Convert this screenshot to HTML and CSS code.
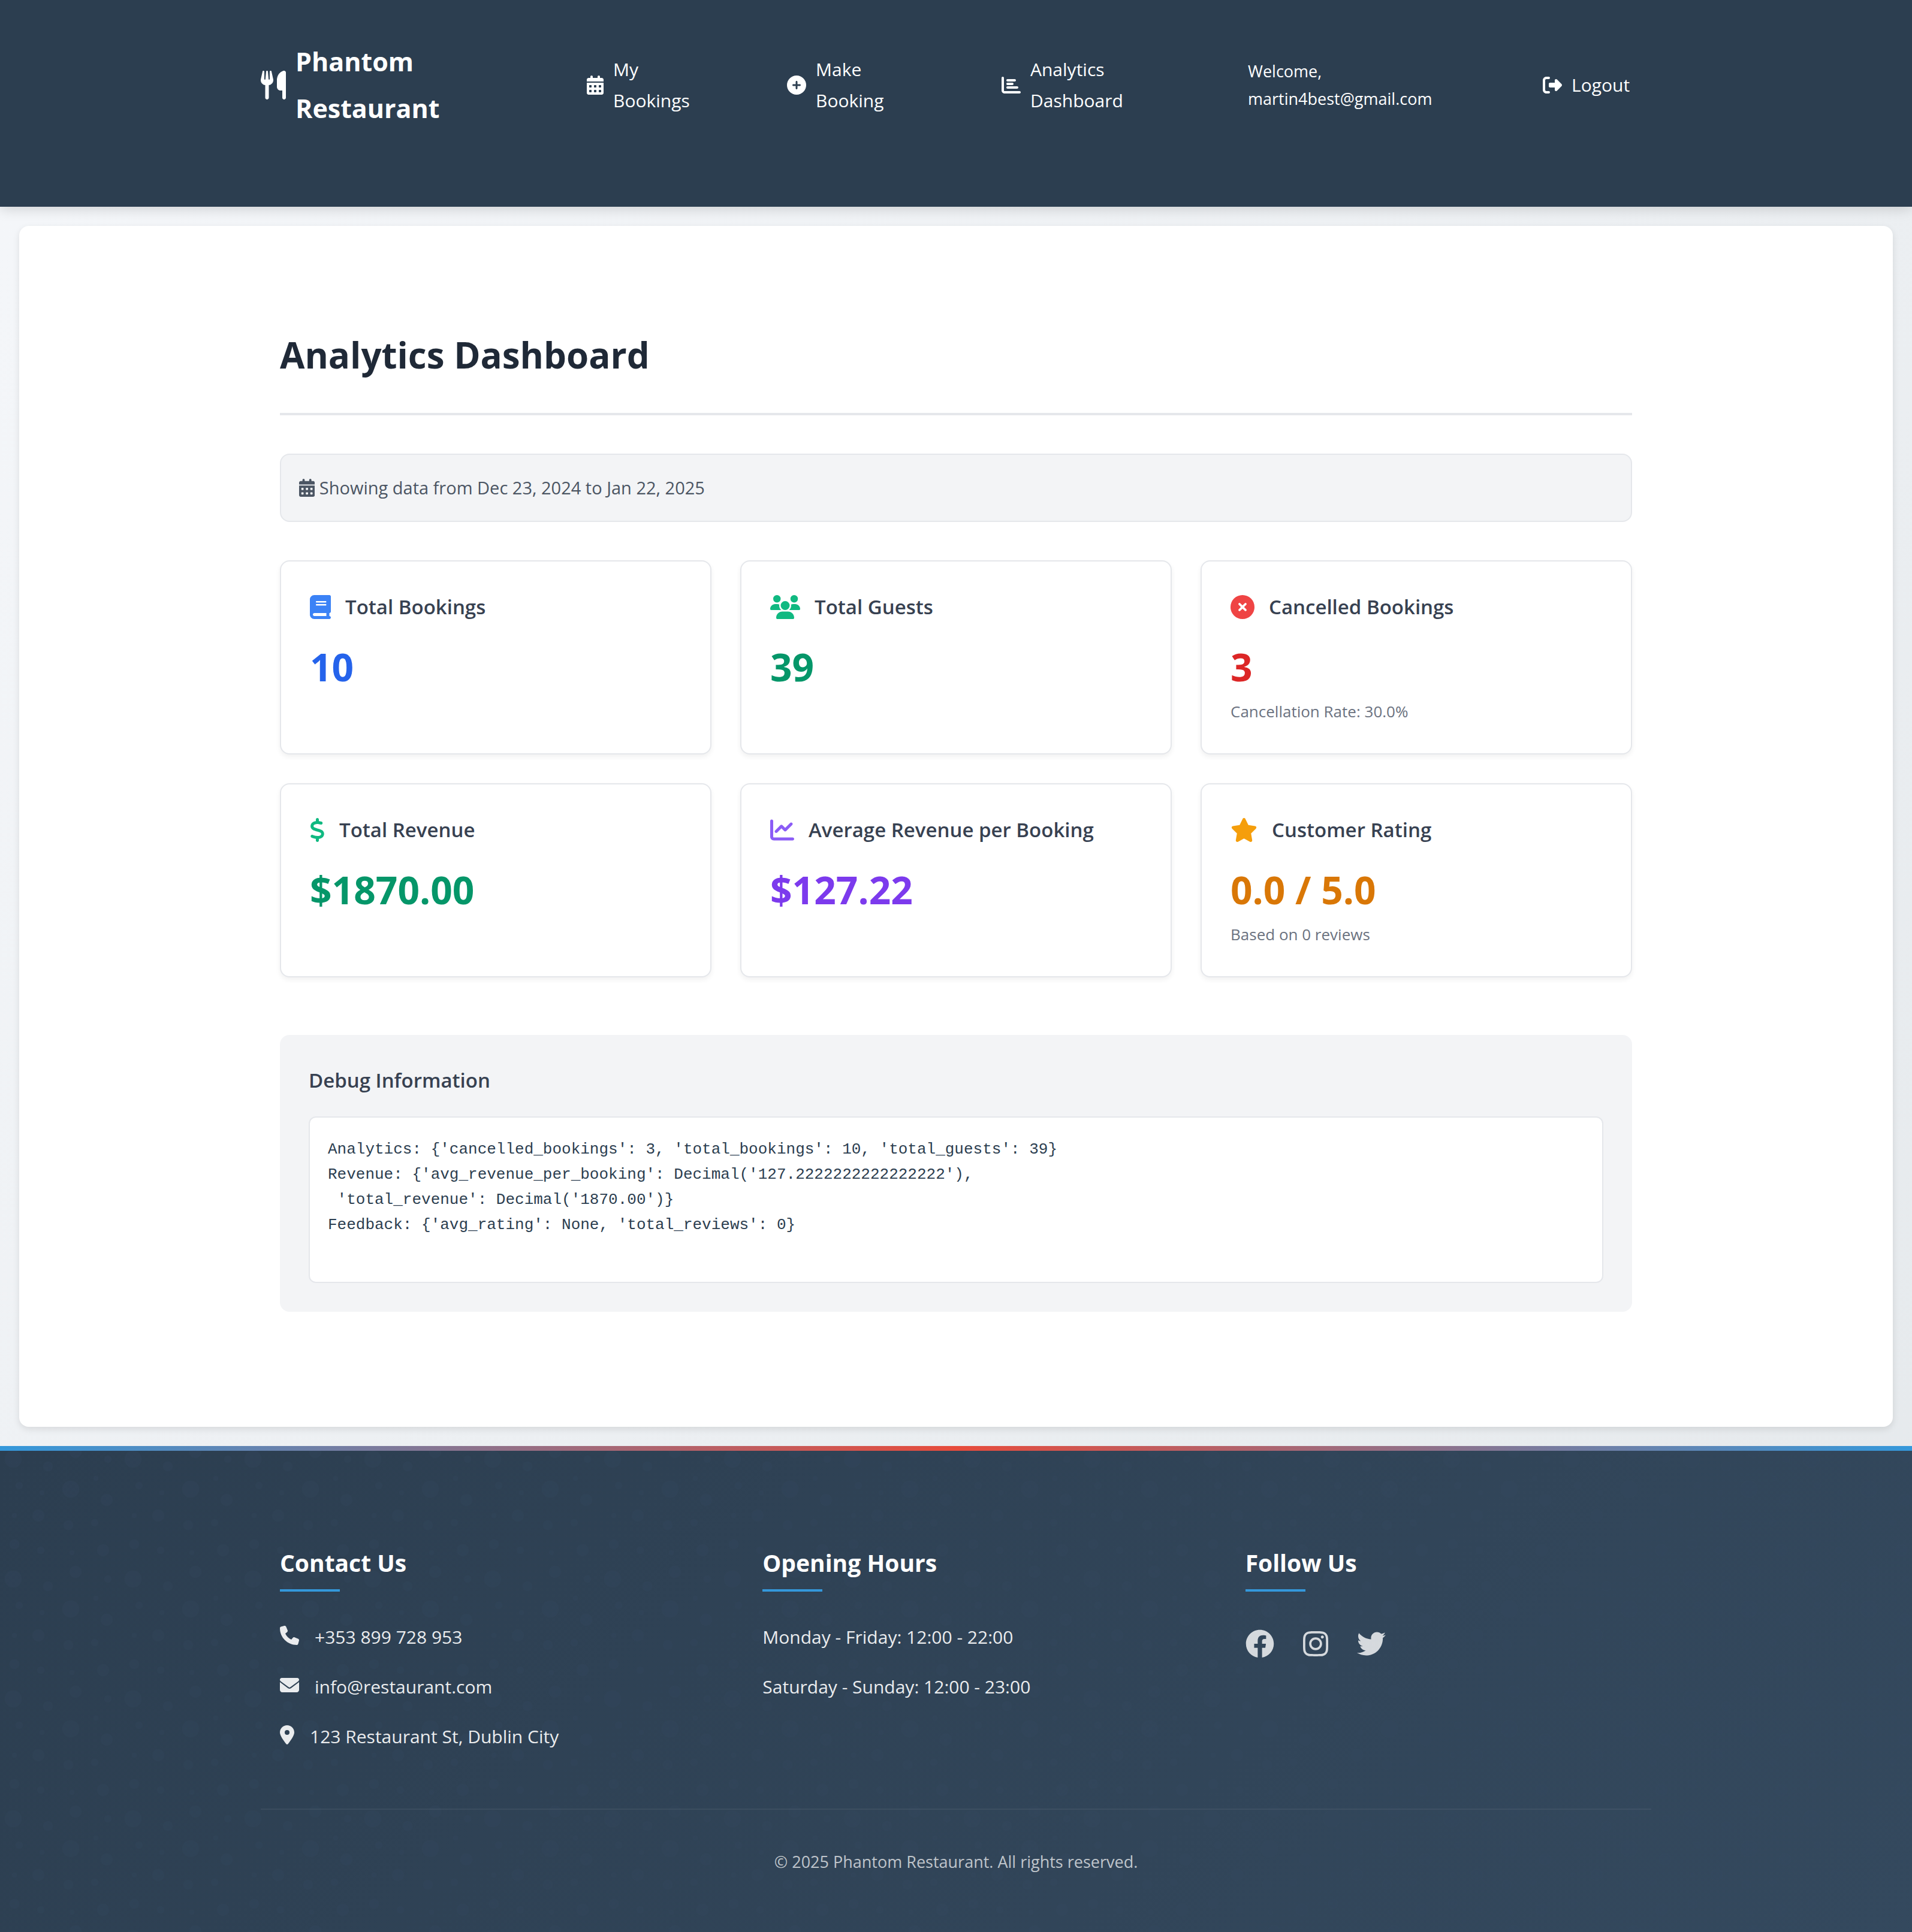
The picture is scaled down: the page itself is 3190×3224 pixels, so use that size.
FILE: index.html
```
<!DOCTYPE html>
<html lang="en">
<head>
<meta charset="utf-8">
<meta name="viewport" content="width=device-width, initial-scale=1">
<title>Analytics Dashboard - Phantom Restaurant</title>
<link rel="stylesheet" href="styles.css">
</head>
<body>
<header class="site-header">
  <div class="header-inner">
    <a class="brand" href="#">
      <svg class="icon icon-lg" viewBox="0 0 448 512" aria-hidden="true"><path d="M416 0C400 0 288 32 288 176V288c0 35.3 28.7 64 64 64h32V480c0 17.7 14.3 32 32 32s32-14.3 32-32V352 240 32c0-17.7-14.3-32-32-32zM64 16C64 7.8 57.9 1 49.7 .1S34.2 4.6 32.4 12.5L2.1 148.8C.7 155.1 0 161.5 0 167.9c0 45.9 35.1 83.6 80 87.7V480c0 17.7 14.3 32 32 32s32-14.3 32-32V255.6c44.9-4.1 80-41.8 80-87.7c0-6.4-.7-12.8-2.1-19.1L191.6 12.5c-1.8-8-9.3-13.3-17.4-12.4S160 7.8 160 16V150.2c0 5.4-4.4 9.8-9.8 9.8c-5.1 0-9.3-3.9-9.8-9L127.9 14.6C127.2 6.3 120.3 0 112 0s-15.2 6.3-15.9 14.6L83.7 151c-.5 5.1-4.7 9-9.8 9c-5.4 0-9.8-4.4-9.8-9.8V16z"/></svg>
      <span class="stacked">Phantom Restaurant</span>
    </a>
    <nav class="nav" aria-label="Main">
      <a class="nav-link" href="#">
        <svg class="icon icon-sm" viewBox="0 0 448 512" aria-hidden="true"><path d="M128 0c17.7 0 32 14.3 32 32V64H288V32c0-17.7 14.3-32 32-32s32 14.3 32 32V64h48c26.5 0 48 21.5 48 48v48H0V112C0 85.5 21.5 64 48 64H96V32c0-17.7 14.3-32 32-32zM0 192H448V464c0 26.5-21.5 48-48 48H48c-26.5 0-48-21.5-48-48V192zm64 80v32c0 8.8 7.2 16 16 16h32c8.8 0 16-7.2 16-16V272c0-8.8-7.2-16-16-16H80c-8.8 0-16 7.2-16 16zm128 0v32c0 8.8 7.2 16 16 16h32c8.8 0 16-7.2 16-16V272c0-8.8-7.2-16-16-16H208c-8.8 0-16 7.2-16 16zm144-16c-8.8 0-16 7.2-16 16v32c0 8.8 7.2 16 16 16h32c8.8 0 16-7.2 16-16V272c0-8.8-7.2-16-16-16H336zM64 400v32c0 8.8 7.2 16 16 16h32c8.8 0 16-7.2 16-16V400c0-8.8-7.2-16-16-16H80c-8.8 0-16 7.2-16 16zm144-16c-8.8 0-16 7.2-16 16v32c0 8.8 7.2 16 16 16h32c8.8 0 16-7.2 16-16V400c0-8.8-7.2-16-16-16H208zm112 16v32c0 8.8 7.2 16 16 16h32c8.8 0 16-7.2 16-16V400c0-8.8-7.2-16-16-16H336c-8.8 0-16 7.2-16 16z"/></svg>
        <span class="stacked">My Bookings</span>
      </a>
      <a class="nav-link" href="#">
        <svg class="icon icon-sm" viewBox="0 0 512 512" aria-hidden="true"><path d="M256 512A256 256 0 1 0 256 0a256 256 0 1 0 0 512zM232 344V280H168c-13.3 0-24-10.7-24-24s10.7-24 24-24h64V168c0-13.3 10.7-24 24-24s24 10.7 24 24v64h64c13.3 0 24 10.7 24 24s-10.7 24-24 24H280v64c0 13.3-10.7 24-24 24s-24-10.7-24-24z"/></svg>
        <span class="stacked">Make Booking</span>
      </a>
      <a class="nav-link" href="#">
        <svg class="icon icon-sm" viewBox="0 0 512 512" aria-hidden="true"><path d="M32 32c17.7 0 32 14.3 32 32V400c0 8.8 7.2 16 16 16H480c17.7 0 32 14.3 32 32s-14.3 32-32 32H80c-44.2 0-80-35.8-80-80V64C0 46.3 14.3 32 32 32zm96 96c0-17.7 14.3-32 32-32l192 0c17.7 0 32 14.3 32 32s-14.3 32-32 32l-192 0c-17.7 0-32-14.3-32-32zm32 64H288c17.7 0 32 14.3 32 32s-14.3 32-32 32H160c-17.7 0-32-14.3-32-32s14.3-32 32-32zm0 96H416c17.7 0 32 14.3 32 32s-14.3 32-32 32H160c-17.7 0-32-14.3-32-32s14.3-32 32-32z"/></svg>
        <span class="stacked">Analytics Dashboard</span>
      </a>
      <span class="welcome stacked">Welcome, martin4best@gmail.com</span>
      <a class="nav-link" href="#">
        <svg class="icon icon-sm" viewBox="0 0 512 512" aria-hidden="true"><path d="M377.9 105.9L500.7 228.7c7.2 7.2 11.3 17.1 11.3 27.3s-4.1 20.1-11.3 27.3L377.9 406.1c-6.4 6.4-15 9.9-24 9.9c-18.7 0-33.9-15.2-33.9-33.9l0-62.1-128 0c-17.7 0-32-14.3-32-32l0-64c0-17.7 14.3-32 32-32l128 0 0-62.1c0-18.7 15.2-33.9 33.9-33.9c9 0 17.6 3.6 24 9.9zM160 96L96 96c-17.7 0-32 14.3-32 32l0 256c0 17.7 14.3 32 32 32l64 0c17.7 0 32 14.3 32 32s-14.3 32-32 32l-64 0c-53 0-96-43-96-96L0 128C0 75 43 32 96 32l64 0c17.7 0 32 14.3 32 32s-14.3 32-32 32z"/></svg>
        <span>Logout</span>
      </a>
    </nav>
  </div>
</header>

<main class="page">
  <div class="content">
    <h1 class="page-title">Analytics Dashboard</h1>

    <p class="range">
      <svg class="icon range-icon" viewBox="0 0 448 512" aria-hidden="true"><path d="M128 0c17.7 0 32 14.3 32 32V64H288V32c0-17.7 14.3-32 32-32s32 14.3 32 32V64h48c26.5 0 48 21.5 48 48v48H0V112C0 85.5 21.5 64 48 64H96V32c0-17.7 14.3-32 32-32zM0 192H448V464c0 26.5-21.5 48-48 48H48c-26.5 0-48-21.5-48-48V192zm64 80v32c0 8.8 7.2 16 16 16h32c8.8 0 16-7.2 16-16V272c0-8.8-7.2-16-16-16H80c-8.8 0-16 7.2-16 16zm128 0v32c0 8.8 7.2 16 16 16h32c8.8 0 16-7.2 16-16V272c0-8.8-7.2-16-16-16H208c-8.8 0-16 7.2-16 16zm144-16c-8.8 0-16 7.2-16 16v32c0 8.8 7.2 16 16 16h32c8.8 0 16-7.2 16-16V272c0-8.8-7.2-16-16-16H336zM64 400v32c0 8.8 7.2 16 16 16h32c8.8 0 16-7.2 16-16V400c0-8.8-7.2-16-16-16H80c-8.8 0-16 7.2-16 16zm144-16c-8.8 0-16 7.2-16 16v32c0 8.8 7.2 16 16 16h32c8.8 0 16-7.2 16-16V400c0-8.8-7.2-16-16-16H208zm112 16v32c0 8.8 7.2 16 16 16h32c8.8 0 16-7.2 16-16V400c0-8.8-7.2-16-16-16H336c-8.8 0-16 7.2-16 16z"/></svg>
      Showing data from Dec 23, 2024 to Jan 22, 2025
    </p>

    <section class="stats" aria-label="Key figures">
      <article class="card card-blue">
        <h2 class="card-title">
          <svg class="icon icon-md" viewBox="0 0 448 512" aria-hidden="true"><path d="M96 0C43 0 0 43 0 96V416c0 53 43 96 96 96H384h32c17.7 0 32-14.3 32-32s-14.3-32-32-32V384c17.7 0 32-14.3 32-32V32c0-17.7-14.3-32-32-32H384 96zm0 384H352v64H96c-17.7 0-32-14.3-32-32s14.3-32 32-32zm32-240c0-8.8 7.2-16 16-16H336c8.8 0 16 7.2 16 16s-7.2 16-16 16H144c-8.8 0-16-7.2-16-16zm16 48H336c8.8 0 16 7.2 16 16s-7.2 16-16 16H144c-8.8 0-16-7.2-16-16s7.2-16 16-16z"/></svg>
          Total Bookings
        </h2>
        <p class="value">10</p>
      </article>
      <article class="card card-green">
        <h2 class="card-title">
          <svg class="icon icon-md" viewBox="0 0 640 512" aria-hidden="true"><path d="M144 0a80 80 0 1 1 0 160A80 80 0 1 1 144 0zM512 0a80 80 0 1 1 0 160A80 80 0 1 1 512 0zM0 298.7C0 239.8 47.8 192 106.7 192h42.7c15.9 0 31 3.5 44.6 9.7c-1.3 7.2-1.9 14.7-1.9 22.3c0 38.2 16.8 72.5 43.3 96c-.2 0-.4 0-.7 0H21.3C9.6 320 0 310.4 0 298.7zM405.3 320c-.2 0-.4 0-.7 0c26.6-23.5 43.3-57.8 43.3-96c0-7.6-.7-15-1.9-22.3c13.6-6.3 28.7-9.7 44.6-9.7h42.7C592.2 192 640 239.8 640 298.7c0 11.8-9.6 21.3-21.3 21.3H405.3zM224 224a96 96 0 1 1 192 0 96 96 0 1 1 -192 0zM128 485.3C128 411.7 187.7 352 261.3 352H378.7C452.3 352 512 411.7 512 485.3c0 14.7-11.9 26.7-26.7 26.7H154.7c-14.7 0-26.7-11.9-26.7-26.7z"/></svg>
          Total Guests
        </h2>
        <p class="value">39</p>
      </article>
      <article class="card card-red">
        <h2 class="card-title">
          <svg class="icon icon-md" viewBox="0 0 512 512" aria-hidden="true"><path d="M256 512A256 256 0 1 0 256 0a256 256 0 1 0 0 512zM175 175c9.4-9.4 24.6-9.4 33.9 0l47 47 47-47c9.4-9.4 24.6-9.4 33.9 0s9.4 24.6 0 33.9l-47 47 47 47c9.4 9.4 9.4 24.6 0 33.9s-24.6 9.4-33.9 0l-47-47-47 47c-9.4 9.4-24.6 9.4-33.9 0s-9.4-24.6 0-33.9l47-47-47-47c-9.4-9.4-9.4-24.6 0-33.9z"/></svg>
          Cancelled Bookings
        </h2>
        <p class="value">3</p>
        <p class="note">Cancellation Rate: 30.0%</p>
      </article>
      <article class="card card-green">
        <h2 class="card-title">
          <svg class="icon icon-md" viewBox="0 0 320 512" aria-hidden="true"><path d="M160 0c17.7 0 32 14.3 32 32V67.7c1.6 .2 3.1 .4 4.7 .7c.4 .1 .7 .1 1.1 .2l48 8.8c17.4 3.2 28.9 19.9 25.7 37.2s-19.9 28.9-37.2 25.7l-47.5-8.7c-31.3-4.6-58.9-1.5-78.3 6.2s-27.2 18.3-29 28.1c-2 10.7-.5 16.7 1.2 20.4c1.8 3.9 5.5 8.3 12.8 13.2c16.3 10.7 41.3 17.7 73.7 26.3l2.9 .8c28.6 7.6 63.6 16.8 89.6 33.8c14.2 9.3 27.6 21.9 35.9 39.5c8.5 17.9 10.3 37.9 6.4 59.2c-6.9 38-33.1 63.4-65.6 76.7c-13.7 5.6-28.6 9.2-44.4 11V480c0 17.7-14.3 32-32 32s-32-14.3-32-32V445.1c-.4-.1-.9-.1-1.3-.2l-.2 0 0 0c-24.4-3.8-64.5-14.3-91.5-26.3c-16.1-7.2-23.4-26.1-16.2-42.2s26.1-23.4 42.2-16.2c20.9 9.3 55.3 18.5 75.2 21.6c31.9 4.7 58.2 2 76-5.3c16.9-6.9 24.6-16.9 26.8-28.9c1.9-10.6 .4-16.7-1.3-20.4c-1.9-4-5.6-8.4-13-13.3c-16.4-10.7-41.5-17.7-74-26.3l-2.8-.7 0 0C119.4 279.3 84.4 270 58.4 253c-14.2-9.3-27.5-22-35.8-39.6c-8.4-17.9-10.1-37.9-6.1-59.2C23.7 116 52.3 91.2 84.8 78.3c13.3-5.3 27.9-8.9 43.2-11V32c0-17.7 14.3-32 32-32z"/></svg>
          Total Revenue
        </h2>
        <p class="value">$1870.00</p>
      </article>
      <article class="card card-purple">
        <h2 class="card-title">
          <svg class="icon icon-md" viewBox="0 0 512 512" aria-hidden="true"><path d="M64 64c0-17.7-14.3-32-32-32S0 46.3 0 64V400c0 44.2 35.8 80 80 80H480c17.7 0 32-14.3 32-32s-14.3-32-32-32H80c-8.8 0-16-7.2-16-16V64zm406.6 86.6c12.5-12.5 12.5-32.8 0-45.3s-32.8-12.5-45.3 0L320 210.7l-57.4-57.4c-12.5-12.5-32.8-12.5-45.3 0l-112 112c-12.5 12.5-12.5 32.8 0 45.3s32.8 12.5 45.3 0L240 221.3l57.4 57.4c12.5 12.5 32.8 12.5 45.3 0l128-128z"/></svg>
          Average Revenue per Booking
        </h2>
        <p class="value">$127.22</p>
      </article>
      <article class="card card-amber">
        <h2 class="card-title">
          <svg class="icon icon-md" viewBox="0 0 576 512" aria-hidden="true"><path d="M316.9 18C311.6 7 300.4 0 288.1 0s-23.4 7-28.8 18L195 150.3 51.4 171.5c-12 1.8-22 10.2-25.7 21.7s-.7 24.2 7.9 32.7L137.8 329 113.2 474.7c-2 12 3 24.2 12.9 31.3s23 8 33.8 2.3l128.3-68.5 128.3 68.5c10.8 5.7 23.9 4.9 33.8-2.3s14.9-19.3 12.9-31.3L438.5 329 542.7 225.9c8.6-8.5 11.7-21.2 7.9-32.7s-13.7-19.9-25.7-21.7L381.2 150.3 316.9 18z"/></svg>
          Customer Rating
        </h2>
        <p class="value">0.0 / 5.0</p>
        <p class="note">Based on 0 reviews</p>
      </article>
    </section>

    <section class="debug">
      <h2 class="debug-title">Debug Information</h2>
      <pre class="debug-output">Analytics: {'cancelled_bookings': 3, 'total_bookings': 10, 'total_guests': 39}
Revenue: {'avg_revenue_per_booking': Decimal('127.2222222222222222'),
 'total_revenue': Decimal('1870.00')}
Feedback: {'avg_rating': None, 'total_reviews': 0}

</pre>
    </section>
  </div>
</main>

<footer class="site-footer">
  <div class="footer-columns">
    <section>
      <h2 class="footer-title">Contact Us</h2>
      <ul class="footer-list">
        <li><svg class="icon icon-sm list-icon" viewBox="0 0 512 512" aria-hidden="true"><path d="M164.9 24.6c-7.7-18.6-28-28.5-47.4-23.2l-88 24C12.1 30.2 0 46 0 64C0 311.4 200.6 512 448 512c18 0 33.8-12.1 38.6-29.5l24-88c5.3-19.4-4.6-39.7-23.2-47.4l-96-40c-16.3-6.8-35.2-2.1-46.3 11.6L304.7 368C234.3 334.7 177.3 277.7 144 207.3L193.3 167c13.7-11.2 18.4-30 11.6-46.3l-40-96z"/></svg>+353 899 728 953</li>
        <li><svg class="icon icon-sm list-icon" viewBox="0 0 512 512" aria-hidden="true"><path d="M48 64C21.5 64 0 85.5 0 112c0 15.1 7.1 29.3 19.2 38.4L236.8 313.6c11.4 8.5 27 8.5 38.4 0L492.8 150.4c12.1-9.1 19.2-23.3 19.2-38.4c0-26.5-21.5-48-48-48H48zM0 176V384c0 35.3 28.7 64 64 64H448c35.3 0 64-28.7 64-64V176L294.4 339.2c-22.8 17.1-54 17.1-76.8 0L0 176z"/></svg>info@restaurant.com</li>
        <li><svg class="icon icon-sm list-icon" viewBox="0 0 384 512" aria-hidden="true"><path d="M215.7 499.2C267 435 384 279.4 384 192C384 86 298 0 192 0S0 86 0 192c0 87.4 117 243 168.3 307.2c12.3 15.3 35.1 15.3 47.4 0zM192 128a64 64 0 1 1 0 128 64 64 0 1 1 0-128z"/></svg>123 Restaurant St, Dublin City</li>
      </ul>
    </section>
    <section>
      <h2 class="footer-title">Opening Hours</h2>
      <ul class="footer-list">
        <li>Monday - Friday: 12:00 - 22:00</li>
        <li>Saturday - Sunday: 12:00 - 23:00</li>
      </ul>
    </section>
    <section>
      <h2 class="footer-title">Follow Us</h2>
      <div class="social">
        <a href="#" aria-label="Facebook"><svg class="icon icon-lg" viewBox="0 0 512 512" aria-hidden="true"><path d="M504 256C504 119 393 8 256 8S8 119 8 256c0 123.78 90.69 226.38 209.25 245V327.69h-63V256h63v-54.64c0-62.15 37-96.48 93.67-96.48 27.14 0 55.52 4.84 55.52 4.84v61h-31.28c-30.8 0-40.41 19.12-40.41 38.73V256h68.78l-11 71.69h-57.78V501C413.31 482.38 504 379.78 504 256z"/></svg></a>
        <a href="#" aria-label="Instagram"><svg class="icon icon-lg" viewBox="0 0 448 512" aria-hidden="true"><path d="M224.1 141c-63.6 0-114.9 51.3-114.9 114.9s51.3 114.9 114.9 114.9S339 319.5 339 255.9 287.7 141 224.1 141zm0 189.6c-41.1 0-74.7-33.5-74.7-74.7s33.5-74.7 74.7-74.7 74.7 33.5 74.7 74.7-33.6 74.7-74.7 74.7zm146.4-194.3c0 14.9-12 26.8-26.8 26.8-14.9 0-26.8-12-26.8-26.8s12-26.8 26.8-26.8 26.8 12 26.8 26.8zm76.1 27.2c-1.7-35.9-9.9-67.7-36.2-93.9-26.2-26.2-58-34.4-93.9-36.2-37-2.1-147.9-2.1-184.9 0-35.8 1.7-67.6 9.9-93.9 36.1s-34.4 58-36.2 93.9c-2.1 37-2.1 147.9 0 184.9 1.7 35.9 9.9 67.7 36.2 93.9s58 34.4 93.9 36.2c37 2.1 147.9 2.1 184.9 0 35.9-1.7 67.7-9.9 93.9-36.2 26.2-26.2 34.4-58 36.2-93.9 2.1-37 2.1-147.8 0-184.8zM398.8 388c-7.8 19.6-22.9 34.7-42.6 42.6-29.5 11.7-99.5 9-132.1 9s-102.7 2.6-132.1-9c-19.6-7.8-34.7-22.9-42.6-42.6-11.7-29.5-9-99.5-9-132.1s-2.6-102.7 9-132.1c7.8-19.6 22.9-34.7 42.6-42.6 29.5-11.7 99.5-9 132.1-9s102.7-2.6 132.1 9c19.6 7.8 34.7 22.9 42.6 42.6 11.7 29.5 9 99.5 9 132.1s2.7 102.7-9 132.1z"/></svg></a>
        <a href="#" aria-label="Twitter"><svg class="icon icon-lg" viewBox="0 0 512 512" aria-hidden="true"><path d="M459.37 151.716c.325 4.548.325 9.097.325 13.645 0 138.72-105.583 298.558-298.558 298.558-59.452 0-114.68-17.219-161.137-47.106 8.447.974 16.568 1.299 25.34 1.299 49.055 0 94.213-16.568 130.274-44.832-46.132-.975-84.792-31.188-98.112-72.772 6.498.974 12.995 1.624 19.818 1.624 9.421 0 18.843-1.3 27.614-3.573-48.081-9.747-84.143-51.98-84.143-102.985v-1.299c13.969 7.797 30.214 12.67 47.431 13.319-28.264-18.843-46.781-51.005-46.781-87.391 0-19.492 5.197-37.36 14.294-52.954 51.655 63.675 129.3 105.258 216.365 109.807-1.624-7.797-2.599-15.918-2.599-24.04 0-57.828 46.782-104.934 104.934-104.934 30.213 0 57.502 12.67 76.67 33.137 23.715-4.548 46.456-13.32 66.599-25.34-7.798 24.366-24.366 44.833-46.132 57.827 21.117-2.273 41.584-8.122 60.426-16.243-14.292 20.791-32.161 39.308-52.628 54.253z"/></svg></a>
      </div>
    </section>
  </div>
  <p class="copyright">© 2025 Phantom Restaurant. All rights reserved.</p>
</footer>
</body>
</html>
```
FILE: styles.css
```
* {
  box-sizing: border-box;
  margin: 0;
  padding: 0;
}

body {
  display: flex;
  flex-direction: column;
  min-height: 100vh;
  font-family: "Open Sans", "Noto Sans", sans-serif;
  font-size: 30px;
  line-height: 52px;
  color: #2c3e50;
  background: linear-gradient(135deg, #f5f7fa 0%, #e4e8eb 100%);
}

a {
  color: inherit;
  text-decoration: none;
}

.icon {
  flex: none;
  width: auto;
  fill: currentColor;
}

.icon-sm { height: 32px; }
.icon-md { height: 40px; }
.icon-lg { height: 48px; }

.stacked { width: min-content; }

/* Header */

.site-header {
  padding: 64px 32px 125px;
  color: #fff;
  background: #2c3e50;
  box-shadow: 0 4px 20px rgba(0, 0, 0, 0.15);
}

.header-inner {
  display: grid;
  grid-template-columns: minmax(0, 544fr) minmax(0, 1744fr);
  align-items: center;
  max-width: 2320px;
  margin: 0 auto;
  padding-right: 32px;
}

.brand {
  display: flex;
  align-items: center;
  gap: 16px;
  font-size: 43px;
  font-weight: 700;
  line-height: 78px;
}

.nav {
  display: grid;
  grid-template-columns: 334fr 358fr 411fr 492fr 149fr;
  align-items: center;
}

.nav-link {
  display: flex;
  align-items: center;
  gap: 16px;
}

.welcome {
  font-size: 27px;
  line-height: 46px;
}

/* Main panel */

.page {
  margin: 32px;
  padding: 160px 32px 192px;
  background: #fff;
  border-radius: 16px;
  box-shadow: 0 4px 12px rgba(0, 0, 0, 0.1);
}

.content {
  max-width: 2256px;
  margin: 0 auto;
}

.page-title {
  margin-bottom: 64px;
  padding-bottom: 42px;
  border-bottom: 4px solid #e5e7eb;
  font-size: 60px;
  font-weight: 700;
  line-height: 110px;
  color: #1f2937;
}

.range {
  margin-bottom: 64px;
  padding: 32px 30px;
  font-size: 29px;
  line-height: 46px;
  color: #4b5563;
  background: #f3f4f6;
  border: 2px solid #e5e7eb;
  border-radius: 16px;
}

.range-icon {
  height: 30px;
  vertical-align: -4px;
}

.stats {
  display: grid;
  grid-template-columns: repeat(3, minmax(0, 1fr));
  gap: 48px;
  margin-bottom: 96px;
}

.card {
  padding: 48px;
  background: #fff;
  border: 2px solid #e5e7eb;
  border-radius: 16px;
  box-shadow: 0 4px 8px rgba(0, 0, 0, 0.06);
}

.card-title,
.debug-title {
  margin-bottom: 32px;
  font-size: 33px;
  font-weight: 600;
  line-height: 56px;
  color: #374151;
}

.card-title {
  display: flex;
  align-items: center;
  gap: 24px;
}

.value {
  font-size: 64px;
  font-weight: 700;
  line-height: 80px;
}

.note {
  margin-top: 12px;
  font-size: 26px;
  line-height: 44px;
  color: #6b7280;
}

.card-blue .icon { color: #3b82f6; }
.card-blue .value { color: #2563eb; }
.card-green .icon { color: #10b981; }
.card-green .value { color: #059669; }
.card-red .icon { color: #ef4444; }
.card-red .value { color: #dc2626; }
.card-purple .icon { color: #8b5cf6; }
.card-purple .value { color: #7c3aed; }
.card-amber .icon { color: #f59e0b; }
.card-amber .value { color: #d97706; }

.debug {
  padding: 48px;
  background: #f3f4f6;
  border-radius: 16px;
}

.debug-output {
  padding: 32px 30px;
  overflow-x: auto;
  font-family: "Liberation Mono", monospace;
  font-size: 26px;
  line-height: 42px;
  color: #2c3e50;
  background: #fff;
  border: 2px solid #e5e7eb;
  border-radius: 12px;
}

/* Footer */

.site-footer {
  flex: 1;
  color: #fff;
  background:
    linear-gradient(90deg, #3498db, #e74c3c, #3498db) top / 100% 8px no-repeat,
    url("data:image/svg+xml,%3Csvg xmlns='http://www.w3.org/2000/svg' viewBox='0 0 100 100'%3E%3Cg fill='%2334495e' fill-opacity='.25'%3E%3Ccircle cx='11' cy='11' r='7'/%3E%3Ccircle cx='59' cy='36' r='7'/%3E%3Ccircle cx='16' cy='33' r='3'/%3E%3Ccircle cx='79' cy='64' r='3'/%3E%3Ccircle cx='34' cy='87' r='3'/%3E%3Ccircle cx='90' cy='11' r='3'/%3E%3Ccircle cx='12' cy='82' r='4'/%3E%3Ccircle cx='40' cy='17' r='4'/%3E%3Ccircle cx='63' cy='5' r='5'/%3E%3Ccircle cx='57' cy='66' r='4'/%3E%3Ccircle cx='86' cy='87' r='5'/%3E%3Ccircle cx='32' cy='58' r='5'/%3E%3Ccircle cx='89' cy='45' r='5'/%3E%3Ccircle cx='80' cy='27' r='2'/%3E%3Ccircle cx='60' cy='89' r='2'/%3E%3Ccircle cx='35' cy='39' r='2'/%3E%3Ccircle cx='12' cy='58' r='2'/%3E%3C/g%3E%3C/svg%3E") 0 0 / 200px 200px,
    linear-gradient(135deg, #2c3e50 0%, #34495e 100%);
  padding: 162px 32px 94px;
}

.footer-columns {
  display: grid;
  grid-template-columns: repeat(3, minmax(0, 1fr));
  gap: 160px;
  max-width: 2256px;
  margin: 0 auto 94px;
}

.footer-title {
  font-size: 39px;
  font-weight: 700;
  line-height: 66px;
}

.footer-title::after {
  content: "";
  display: block;
  width: 100px;
  height: 4px;
  margin-top: 11px;
  background: #3498db;
}

.footer-list {
  display: grid;
  gap: 31px;
  margin-top: 50px;
  list-style: none;
  opacity: 0.9;
}

.list-icon {
  margin-right: 26px;
  vertical-align: -2px;
}

.social {
  display: flex;
  gap: 48px;
  margin-top: 63px;
  opacity: 0.8;
}

.social a { display: flex; }

.copyright {
  max-width: 2320px;
  margin: 0 auto;
  padding-top: 64px;
  border-top: 2px solid rgba(255, 255, 255, 0.06);
  font-size: 27px;
  line-height: 46px;
  text-align: center;
  color: rgba(255, 255, 255, 0.7);
}
```
